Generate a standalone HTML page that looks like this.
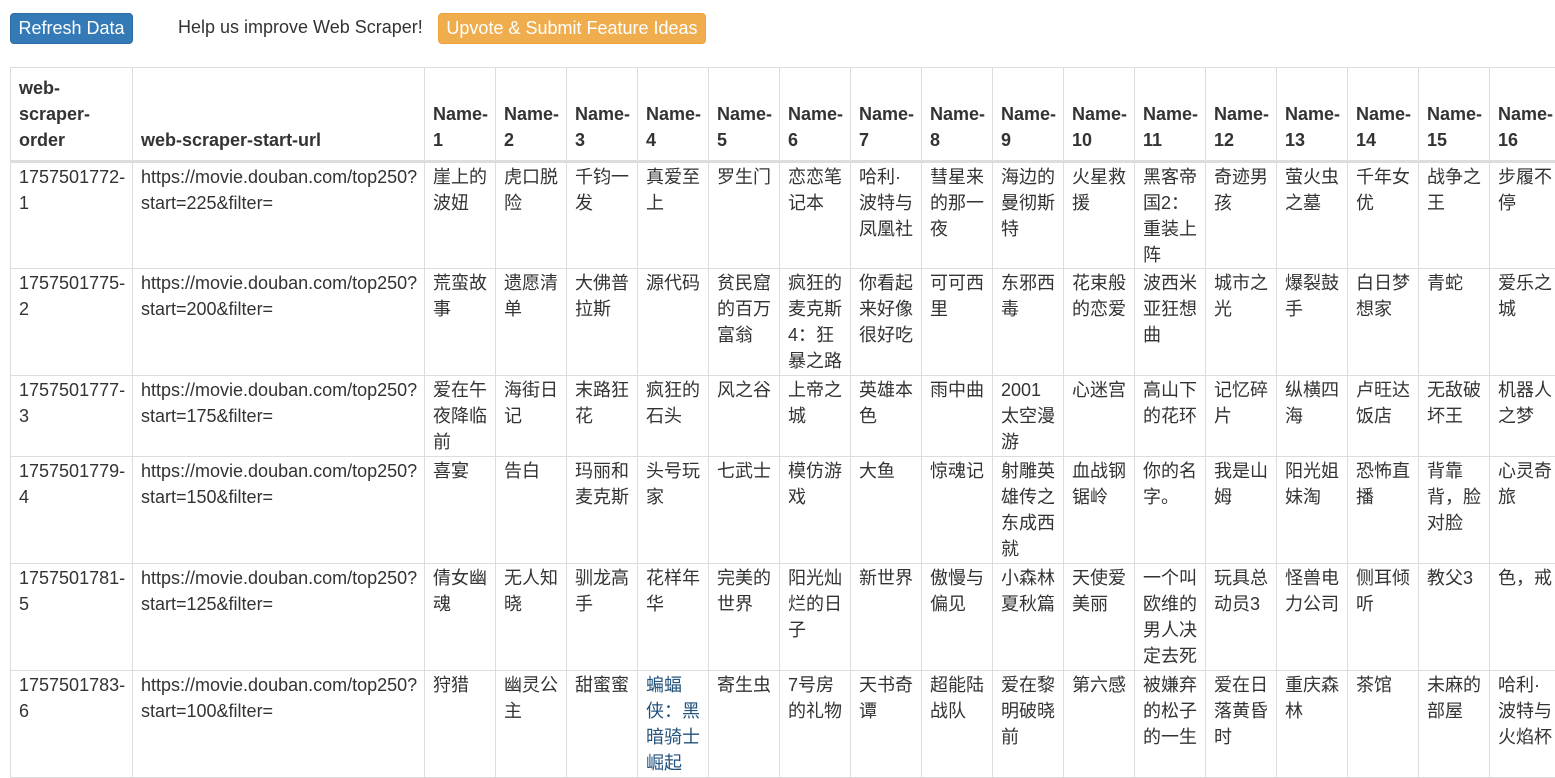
<!DOCTYPE html>
<html><head><meta charset="utf-8">
<style>
html,body{margin:0;padding:0;background:#fff;overflow:hidden;width:1555px;height:766px}
body{font-family:"Liberation Sans","Noto Sans CJK SC",sans-serif;font-size:18px;color:#333}
.btn{position:absolute;top:13px;height:31px;line-height:29px;border-radius:4px;color:#fff;box-sizing:border-box;text-align:center;font-size:18px}
.b1{left:10px;width:123px;background:#337ab7;border:1px solid #2e6da4}
.b2{left:438px;width:268px;background:#f0ad4e;border:1px solid #eea236}
.help{position:absolute;left:178px;top:12px;line-height:30px}
table{position:absolute;left:10px;top:67px;border-collapse:collapse;table-layout:fixed;width:1550px}
td,th{border:1px solid #ddd;padding:1px 8px 0 8px;line-height:26px;vertical-align:top;text-align:left;overflow:hidden;word-wrap:break-word;white-space:normal}
th{vertical-align:bottom;font-weight:bold;border-bottom:3px solid #ddd;padding-bottom:7px;white-space:nowrap}
td:nth-child(1),td:nth-child(2){white-space:nowrap}
thead tr{height:94px}
.h4{height:107px}.h3{height:81px}
.lk{color:#23527c}
</style></head><body>
<div class="btn b1">Refresh Data</div>
<div class="help">Help us improve Web Scraper!</div>
<div class="btn b2">Upvote &amp; Submit Feature Ideas</div>
<table>
<colgroup><col style="width:122px"><col style="width:292px"><col span="16" style="width:71px"></colgroup>
<thead><tr><th>web-<br>scraper-<br>order</th><th>web-scraper-start-url</th><th>Name-<br>1</th><th>Name-<br>2</th><th>Name-<br>3</th><th>Name-<br>4</th><th>Name-<br>5</th><th>Name-<br>6</th><th>Name-<br>7</th><th>Name-<br>8</th><th>Name-<br>9</th><th>Name-<br>10</th><th>Name-<br>11</th><th>Name-<br>12</th><th>Name-<br>13</th><th>Name-<br>14</th><th>Name-<br>15</th><th>Name-<br>16</th></tr></thead>
<tbody>
<tr class="h4"><td>1757501772-<br>1</td><td>https://movie.douban.com/top250?<br>start=225&amp;filter=</td><td>崖上的波妞</td><td>虎口脱险</td><td>千钧一发</td><td>真爱至上</td><td>罗生门</td><td>恋恋笔记本</td><td>哈利·波特与凤凰社</td><td>彗星来的那一夜</td><td>海边的曼彻斯特</td><td>火星救援</td><td>黑客帝国2：重装上阵</td><td>奇迹男孩</td><td>萤火虫之墓</td><td>千年女优</td><td>战争之王</td><td>步履不停</td></tr>
<tr class="h4"><td>1757501775-<br>2</td><td>https://movie.douban.com/top250?<br>start=200&amp;filter=</td><td>荒蛮故事</td><td>遗愿清单</td><td>大佛普拉斯</td><td>源代码</td><td>贫民窟的百万富翁</td><td>疯狂的麦克斯4：狂暴之路</td><td>你看起来好像很好吃</td><td>可可西里</td><td>东邪西毒</td><td>花束般的恋爱</td><td>波西米亚狂想曲</td><td>城市之光</td><td>爆裂鼓手</td><td>白日梦想家</td><td>青蛇</td><td>爱乐之城</td></tr>
<tr class="h3"><td>1757501777-<br>3</td><td>https://movie.douban.com/top250?<br>start=175&amp;filter=</td><td>爱在午夜降临前</td><td>海街日记</td><td>末路狂花</td><td>疯狂的石头</td><td>风之谷</td><td>上帝之城</td><td>英雄本色</td><td>雨中曲</td><td>2001太空漫游</td><td>心迷宫</td><td>高山下的花环</td><td>记忆碎片</td><td>纵横四海</td><td>卢旺达饭店</td><td>无敌破坏王</td><td>机器人之梦</td></tr>
<tr class="h4"><td>1757501779-<br>4</td><td>https://movie.douban.com/top250?<br>start=150&amp;filter=</td><td>喜宴</td><td>告白</td><td>玛丽和麦克斯</td><td>头号玩家</td><td>七武士</td><td>模仿游戏</td><td>大鱼</td><td>惊魂记</td><td>射雕英雄传之东成西就</td><td>血战钢锯岭</td><td>你的名字。</td><td>我是山姆</td><td>阳光姐妹淘</td><td>恐怖直播</td><td>背靠背，脸对脸</td><td>心灵奇旅</td></tr>
<tr class="h4"><td>1757501781-<br>5</td><td>https://movie.douban.com/top250?<br>start=125&amp;filter=</td><td>倩女幽魂</td><td>无人知晓</td><td>驯龙高手</td><td>花样年华</td><td>完美的世界</td><td>阳光灿烂的日子</td><td>新世界</td><td>傲慢与偏见</td><td>小森林 夏秋篇</td><td>天使爱美丽</td><td>一个叫欧维的男人决定去死</td><td>玩具总动员3</td><td>怪兽电力公司</td><td>侧耳倾听</td><td>教父3</td><td>色，戒</td></tr>
<tr class="h4"><td>1757501783-<br>6</td><td>https://movie.douban.com/top250?<br>start=100&amp;filter=</td><td>狩猎</td><td>幽灵公主</td><td>甜蜜蜜</td><td class="lk">蝙蝠侠：黑暗骑士崛起</td><td>寄生虫</td><td>7号房的礼物</td><td>天书奇谭</td><td>超能陆战队</td><td>爱在黎明破晓前</td><td>第六感</td><td>被嫌弃的松子的一生</td><td>爱在日落黄昏时</td><td>重庆森林</td><td>茶馆</td><td>未麻的部屋</td><td>哈利·波特与火焰杯</td></tr>
</tbody></table>
</body></html>
